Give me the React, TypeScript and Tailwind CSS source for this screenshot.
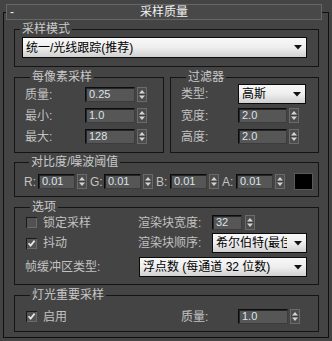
import React from 'react'

const Spinner = () => (
  <svg width="10" height="15" viewBox="0 0 10 15" className="shrink-0 ml-[2px]">
    <rect x="0.5" y="0.5" width="9" height="14" fill="#4c4c4c" stroke="#6a6a6a" />
    <line x1="1" y1="7.5" x2="9" y2="7.5" stroke="#3e3e3e" />
    <polygon points="2,6.5 8,6.5 5,3" fill="#d4d4d4" />
    <polygon points="2,8.5 8,8.5 5,12" fill="#d4d4d4" />
  </svg>
)

const Field = ({ value, className }: { value: string; className: string }) => (
  <div
    className={`${className} h-[15px] shrink-0 flex items-center pl-[3px] bg-[#565656] border border-t-[#0c0c0c] border-l-[#0c0c0c] border-r-[#3c3c3c] border-b-[#3c3c3c] shadow-[inset_1px_1px_0_#262626] text-[11px] leading-[13px] text-[#dbe3ea]`}
  >
    {value}
  </div>
)

const Arrow = () => (
  <svg width="8" height="5" viewBox="0 0 8 5" className="shrink-0">
    <polygon points="0,0 8,0 4,4.5" fill="#111" />
  </svg>
)

const Dropdown = ({ text, className }: { text: React.ReactNode; className: string }) => (
  <div
    className={`${className} shrink-0 flex items-center justify-between pl-[3px] pr-[4px] border border-[#0a0a0a] bg-linear-to-b from-[#f8f8f8] via-[#eeeeee] to-[#d0d0d0] text-[12px] leading-[14px] text-black`}
  >
    {text}
    <Arrow />
  </div>
)

const Check = ({ checked }: { checked?: boolean }) => (
  <svg width="11" height="11" viewBox="0 0 11 11" className="shrink-0">
    <rect x="0" y="0" width="11" height="11" fill="#1a1a1a" />
    <rect x="1" y="1" width="10" height="10" fill="#6a6a6a" />
    <rect x="1" y="1" width="9" height="9" fill="#525252" />
    {checked && <path d="M2.5 5.2 L4.6 7.6 L8.6 2.6" fill="none" stroke="#e6e6e6" strokeWidth="1.7" />}
  </svg>
)

const Group = ({ title, className, children }: { title: string; className: string; children: React.ReactNode }) => (
  <fieldset className={`border border-[#141414] ${className}`}>
    <legend className="ml-[5px] px-[2px] text-[12px] leading-[14px] text-[#c9c9c9]">{title}</legend>
    {children}
  </fieldset>
)

const Label = ({ children, className }: { children: React.ReactNode; className: string }) => (
  <span className={`${className} shrink-0 text-[12px] leading-[14px] text-[#c2c2c2]`}>{children}</span>
)

export default function App() {
  const rgba = ['R:', 'G:', 'B:', 'A:']

  return (
    <div className="w-[332px] h-[341px] bg-[#444444] overflow-hidden pt-[12px] pl-[3px] font-['Liberation_Sans','Noto_Sans_CJK_SC',sans-serif]">
      <div className="w-[326px] h-[326px] border border-[#0f0f0f]">
        <div className="-mt-[9px] ml-[2px] w-[316px] h-[16px] grid grid-cols-[20px_1fr_20px] items-center bg-[#484848] border border-[#666666] text-[12px] leading-[14px] text-[#f2f2f2]">
          <span className="pl-[3px]">-</span>
          <span className="text-center">采样质量</span>
          <span />
        </div>

        <Group title="采样模式" className="mt-[2px] ml-[10px] w-[305px] pb-[8px]">
          <Dropdown text="统一/光线跟踪(推荐)" className="mt-[1px] ml-[7px] w-[285px] h-[21px]" />
        </Group>

        <div className="mt-[3px] ml-[10px] flex gap-[6px]">
          <Group title="每像素采样" className="w-[150px] pb-[8px] pl-[10px]">
            {[
              ['质量:', '0.25', 'mt-[3px]'],
              ['最小:', '1.0', 'mt-[6px]'],
              ['最大:', '128', 'mt-[6px]'],
            ].map(([l, v, m]) => (
              <div key={l} className={`${m} flex items-center`}>
                <Label className="w-[60px]">{l}</Label>
                <Field value={v} className="w-[50px]" />
                <Spinner />
              </div>
            ))}
          </Group>
          <Group title="过滤器" className="w-[149px] pb-[8px] pl-[10px]">
            <div className="flex items-center">
              <Label className="w-[57px]">类型:</Label>
              <Dropdown text="高斯" className="w-[68px] h-[20px]" />
            </div>
            <div className="mt-[4px] flex items-center">
              <Label className="w-[57px]">宽度:</Label>
              <Field value="2.0" className="w-[49px]" />
              <Spinner />
            </div>
            <div className="mt-[6px] flex items-center">
              <Label className="w-[57px]">高度:</Label>
              <Field value="2.0" className="w-[49px]" />
              <Spinner />
            </div>
          </Group>
        </div>

        <Group title="对比度/噪波阈值" className="mt-[2px] ml-[10px] w-[305px] pb-[6px] pl-[9px]">
          <div className="mt-[4px] h-[17px] flex items-center">
            {rgba.map((l) => (
              <div key={l} className="flex items-center mr-[3px]">
                <Label className="w-[14px]">{l}</Label>
                <Field value="0.01" className="w-[37px]" />
                <Spinner />
              </div>
            ))}
            <div className="ml-[6px] w-[19px] h-[17px] bg-black border border-[#5a5a5a]" />
          </div>
        </Group>

        <Group title="选项" className="mt-[3px] ml-[10px] w-[305px] pb-[7px] pl-[10px]">
          <div className="mt-[1px] h-[15px] flex items-center">
            <div className="w-[113px] flex items-center pl-[1px]">
              <Check />
              <Label className="ml-[6px]">锁定采样</Label>
            </div>
            <Label className="w-[74px]">渲染块宽度:</Label>
            <Field value="32" className="w-[30px]" />
            <div className="ml-[1px] flex">
              <Spinner />
            </div>
          </div>
          <div className="mt-[3px] h-[20px] flex items-center">
            <div className="w-[113px] flex items-center pl-[1px]">
              <Check checked />
              <Label className="ml-[6px]">抖动</Label>
            </div>
            <Label className="w-[74px]">渲染块顺序:</Label>
            <Dropdown
              text={
                <span className="w-[71px] overflow-hidden whitespace-nowrap">希尔伯特(最佳)</span>
              }
              className="w-[95px] h-[20px]"
            />
          </div>
          <div className="mt-[4px] h-[20px] flex items-center">
            <Label className="w-[114px]">帧缓冲区类型:</Label>
            <Dropdown text="浮点数 (每通道 32 位数)" className="w-[168px] h-[20px]" />
          </div>
        </Group>

        <Group title="灯光重要采样" className="mt-[3px] ml-[10px] w-[305px] pb-[7px] pl-[10px]">
          <div className="mt-[7px] h-[15px] flex items-center">
            <div className="w-[156px] flex items-center pl-[1px]">
              <Check checked />
              <Label className="ml-[6px]">启用</Label>
            </div>
            <Label className="w-[57px]">质量:</Label>
            <Field value="1.0" className="w-[50px]" />
            <Spinner />
          </div>
        </Group>
      </div>
    </div>
  )
}
